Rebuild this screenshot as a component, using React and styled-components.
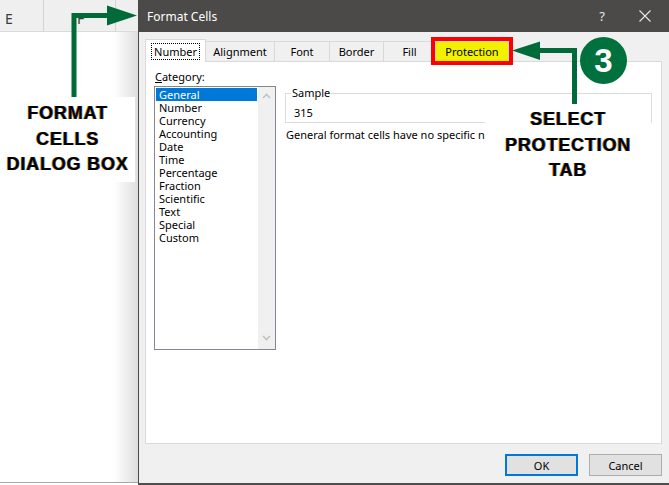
import React from 'react';
import styled, { createGlobalStyle } from 'styled-components';

const GlobalStyle = createGlobalStyle`
  html, body {
    margin: 0;
    padding: 0;
  }
  body {
    width: 669px;
    height: 485px;
    overflow: hidden;
    background: #fff;
    font-family: "Noto Sans", "Open Sans", sans-serif;
  }
`;

const GREEN = '#006b38';

const Screen = styled.div`
  position: relative;
  display: flex;
  width: 669px;
  height: 485px;
  overflow: hidden;
`;

// excel sheet peeking out on the left
const Sheet = styled.div`
  display: flex;
  flex-direction: column;
  width: 138px;
  padding-bottom: 2px;
`;

const ColumnHeader = styled.div`
  display: flex;
  height: 31px;
  background: #efefef;
  border-bottom: 1px solid #dadada;
`;

const ColumnCell = styled.div`
  display: flex;
  align-items: center;
  width: ${({ $w }) => $w}px;
  padding: 6px 0 0 ${({ $pad }) => $pad || 0}px;
  box-sizing: border-box;
  border-right: ${({ $last }) => ($last ? 'none' : '1px solid #d4d4d4')};
  font-size: 14px;
  color: #3a3a3a;
`;

const Grid = styled.div`
  flex: 1;
  background: linear-gradient(to right, #fff 0, #fff 114px, #e0e0e0 137px);
  border-bottom: 1px solid #a8a8a8;
`;

// dialog
const Dialog = styled.div`
  flex: 1;
  display: flex;
  flex-direction: column;
  background: #f0f0f0;
  border-left: 1px solid #4a4a4a;
  border-bottom: 2px solid #4e4e4e;
`;

const TitleBar = styled.div`
  display: flex;
  align-items: center;
  height: 32px;
  padding-left: 8px;
  background: #4b4a48;
  color: #fff;
  font-size: 12px;
`;

const Title = styled.span`
  flex: 1;
`;

const TitleButton = styled.div`
  display: flex;
  align-items: center;
  justify-content: center;
  width: ${({ $w }) => $w}px;
  height: 32px;
  color: #e8e8e8;
  font-size: 13px;
`;

const Body = styled.div`
  display: flex;
  flex-direction: column;
  padding: 7px 7px 0 6px;
`;

const TabRow = styled.div`
  position: relative;
  z-index: 2;
  display: flex;
  align-items: flex-end;
  height: 23px;
  margin-bottom: -1px;
`;

const Tab = styled.div`
  position: relative;
  display: flex;
  align-items: center;
  justify-content: center;
  box-sizing: border-box;
  width: ${({ $w }) => $w}px;
  height: ${({ $active }) => ($active ? 23 : 20)}px;
  margin-left: ${({ $first }) => ($first ? 0 : -1)}px;
  margin-bottom: ${({ $active }) => ($active ? 0 : 1)}px;
  background: ${({ $active, $marked }) => ($marked ? '#f2f200' : $active ? '#fff' : '#f0f0f0')};
  border: 1px solid #d9d9d9;
  border-bottom: none;
  outline: ${({ $marked }) => ($marked ? '4px solid #ff0000' : 'none')};
  z-index: ${({ $active, $marked }) => ($active || $marked ? 1 : 0)};
  font-size: 11px;
  color: #000;
`;

const FocusText = styled.span`
  padding: 0 2px;
  line-height: 15px;
  border: 1px dotted #000;
`;

const Panel = styled.div`
  display: flex;
  gap: 9px;
  height: 383px;
  box-sizing: border-box;
  padding: 8px 9px 0 8px;
  background: #fff;
  border: 1px solid #d9d9d9;
`;

const LeftColumn = styled.div`
  display: flex;
  flex-direction: column;
  width: 122px;
`;

const Label = styled.div`
  padding-left: 1px;
  font-size: 11px;
  line-height: 14px;
  color: #000;

  u {
    text-decoration-thickness: 1px;
  }
`;

const ListBox = styled.div`
  display: flex;
  height: 264px;
  margin-top: 2px;
  box-sizing: border-box;
  border: 1px solid #828790;
`;

const Items = styled.div`
  flex: 1;
  padding: 1px;
`;

const Item = styled.div`
  height: 13px;
  padding-left: 3px;
  font-size: 11px;
  line-height: 13px;
  background: ${({ $selected }) => ($selected ? '#0078d7' : 'transparent')};
  color: ${({ $selected }) => ($selected ? '#fff' : '#000')};
`;

const ScrollBar = styled.div`
  display: flex;
  flex-direction: column;
  justify-content: space-between;
  align-items: center;
  width: 17px;
  padding: 6px 0 8px;
  background: #f0f0f0;
`;

const RightColumn = styled.div`
  flex: 1;
  display: flex;
  flex-direction: column;
`;

const SampleBox = styled.fieldset`
  margin: 16px 0 0;
  padding: 6px 8px 2px;
  border: 1px solid #dcdcdc;
  font-size: 11px;
  line-height: 14px;

  legend {
    margin-left: -3px;
    padding: 0 1px;
  }
`;

const Description = styled.div`
  margin-top: 5px;
  padding-left: 1px;
  font-size: 11px;
  line-height: 14px;
  color: #000;
`;

const Footer = styled.div`
  display: flex;
  justify-content: flex-end;
  gap: 11px;
  padding-top: 10px;
  height: 39px;
  box-sizing: border-box;
`;

const Button = styled.div`
  display: flex;
  align-items: center;
  justify-content: center;
  width: 73px;
  height: 22px;
  box-sizing: border-box;
  background: #e1e1e1;
  border: ${({ $primary }) => ($primary ? '2px solid #0078d7' : '1px solid #adadad')};
  font-size: 11px;
  color: #000;
`;

// annotations laid over the screenshot
const Callout = styled.div`
  position: absolute;
  left: ${({ $x }) => $x}px;
  top: ${({ $y }) => $y}px;
  width: ${({ $w }) => $w}px;
  height: ${({ $h }) => $h}px;
  padding-top: ${({ $pt }) => $pt || 0}px;
  box-sizing: border-box;
  background: #fff;
  text-align: center;
  font-family: "Liberation Sans", Arial, sans-serif;
  font-weight: bold;
  font-size: 18px;
  letter-spacing: 0.8px;
  line-height: 25.5px;
  color: #000;
  text-shadow: -0.6px 0.4px 0 #d88a00, 0.6px 0 0 #2060d0;
`;

const Overlay = styled.svg`
  position: absolute;
  left: ${({ $x }) => $x}px;
  top: ${({ $y }) => $y}px;
  overflow: visible;
`;

const Badge = styled.div`
  position: absolute;
  left: 580px;
  top: 37px;
  display: flex;
  align-items: center;
  justify-content: center;
  width: 47px;
  height: 47px;
  border-radius: 50%;
  background: #00703c;
  color: #fff;
  font-family: "Liberation Sans", Arial, sans-serif;
  font-weight: bold;
  font-size: 33px;
`;

const categories = [
  'General',
  'Number',
  'Currency',
  'Accounting',
  'Date',
  'Time',
  'Percentage',
  'Fraction',
  'Scientific',
  'Text',
  'Special',
  'Custom',
];

const tabs = [
  { name: 'Number', w: 61 },
  { name: 'Alignment', w: 70 },
  { name: 'Font', w: 56 },
  { name: 'Border', w: 55 },
  { name: 'Fill', w: 53 },
  { name: 'Protection', w: 74 },
];

const Chevron = ({ up }) => (
  <svg width="9" height="6" viewBox="0 0 9 6">
    <path
      d={up ? 'M1 5 L4.5 1.5 L8 5' : 'M1 1 L4.5 4.5 L8 1'}
      fill="none"
      stroke="#c2c2c2"
      strokeWidth="1.6"
    />
  </svg>
);

const App = () => (
  <>
    <GlobalStyle />
    <Screen>
      <Sheet>
        <ColumnHeader>
          <ColumnCell $w={44} $pad={5}>E</ColumnCell>
          <ColumnCell $w={72} $pad={33}>F</ColumnCell>
          <ColumnCell $w={22} $last />
        </ColumnHeader>
        <Grid />
      </Sheet>

      <Dialog>
        <TitleBar>
          <Title>Format Cells</Title>
          <TitleButton $w={36}>?</TitleButton>
          <TitleButton $w={49}>
            <svg width="12" height="12" viewBox="0 0 12 12">
              <path d="M0.5 0.5 L11.5 11.5 M11.5 0.5 L0.5 11.5" stroke="#e8e8e8" strokeWidth="1.1" />
            </svg>
          </TitleButton>
        </TitleBar>

        <Body>
          <TabRow>
            {tabs.map((t, i) => (
              <Tab
                key={t.name}
                $w={t.w}
                $first={i === 0}
                $active={i === 0}
                $marked={t.name === 'Protection'}
              >
                {i === 0 ? <FocusText>{t.name}</FocusText> : t.name}
              </Tab>
            ))}
          </TabRow>

          <Panel>
            <LeftColumn>
              <Label>
                <u>C</u>ategory:
              </Label>
              <ListBox>
                <Items>
                  {categories.map((c, i) => (
                    <Item key={c} $selected={i === 0}>
                      {c}
                    </Item>
                  ))}
                </Items>
                <ScrollBar>
                  <Chevron up />
                  <Chevron />
                </ScrollBar>
              </ListBox>
            </LeftColumn>

            <RightColumn>
              <SampleBox>
                <legend>Sample</legend>
                315
              </SampleBox>
              <Description>General format cells have no specific number format.</Description>
            </RightColumn>
          </Panel>

          <Footer>
            <Button $primary>OK</Button>
            <Button>Cancel</Button>
          </Footer>
        </Body>
      </Dialog>

      <Callout $x={0} $y={97} $w={135} $h={85} $pt={4}>
        FORMAT
        <br />
        CELLS
        <br />
        DIALOG BOX
      </Callout>

      <Callout $x={485} $y={107} $w={166} $h={78}>
        SELECT
        <br />
        PROTECTION
        <br />
        TAB
      </Callout>

      <Overlay $x={0} $y={0} width="140" height="100">
        <path d="M74 97 V15.5 H110" fill="none" stroke={GREEN} strokeWidth="5" />
        <polygon points="107,5.5 137,15.5 107,25.5" fill={GREEN} />
      </Overlay>

      <Overlay $x={505} $y={35} width="80" height="70">
        <path d="M69.5 69 V15.5 H32" fill="none" stroke={GREEN} strokeWidth="5" />
        <polygon points="35,6.5 7,15.5 35,25" fill={GREEN} />
      </Overlay>

      <Badge>3</Badge>
    </Screen>
  </>
);

export default App;
